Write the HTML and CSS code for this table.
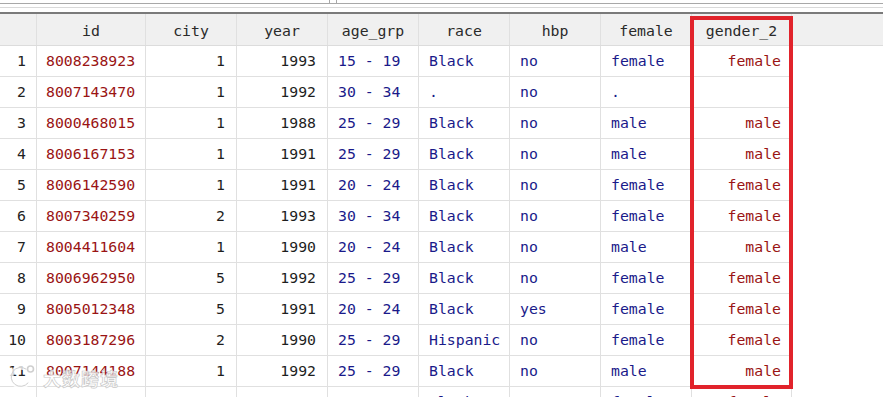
FILE: index.html
```html
<!DOCTYPE html>
<html>
<head>
<meta charset="utf-8">
<link rel="stylesheet" href="styles.css">
</head>
<body>
<div class="page">
  <div class="topbar">
    <div class="box box-left"></div>
    <div class="box box-right"></div>
  </div>
  <div class="sep"></div>
  <div class="grid">
    <div class="row head">
      <div class="c"></div>
      <div class="c">id</div>
      <div class="c">city</div>
      <div class="c">year</div>
      <div class="c">age_grp</div>
      <div class="c">race</div>
      <div class="c">hbp</div>
      <div class="c">female</div>
      <div class="c">gender_2</div>
      <div class="c fill"></div>
    </div>
    <div class="row"><div class="c n">1</div><div class="c s">8008238923</div><div class="c r">1</div><div class="c r">1993</div><div class="c l">15 - 19</div><div class="c l">Black</div><div class="c l">no</div><div class="c l">female</div><div class="c sr">female</div></div>
    <div class="row"><div class="c n">2</div><div class="c s">8007143470</div><div class="c r">1</div><div class="c r">1992</div><div class="c l">30 - 34</div><div class="c l">.</div><div class="c l">no</div><div class="c l">.</div><div class="c sr"></div></div>
    <div class="row"><div class="c n">3</div><div class="c s">8000468015</div><div class="c r">1</div><div class="c r">1988</div><div class="c l">25 - 29</div><div class="c l">Black</div><div class="c l">no</div><div class="c l">male</div><div class="c sr">male</div></div>
    <div class="row"><div class="c n">4</div><div class="c s">8006167153</div><div class="c r">1</div><div class="c r">1991</div><div class="c l">25 - 29</div><div class="c l">Black</div><div class="c l">no</div><div class="c l">male</div><div class="c sr">male</div></div>
    <div class="row"><div class="c n">5</div><div class="c s">8006142590</div><div class="c r">1</div><div class="c r">1991</div><div class="c l">20 - 24</div><div class="c l">Black</div><div class="c l">no</div><div class="c l">female</div><div class="c sr">female</div></div>
    <div class="row"><div class="c n">6</div><div class="c s">8007340259</div><div class="c r">2</div><div class="c r">1993</div><div class="c l">30 - 34</div><div class="c l">Black</div><div class="c l">no</div><div class="c l">female</div><div class="c sr">female</div></div>
    <div class="row"><div class="c n">7</div><div class="c s">8004411604</div><div class="c r">1</div><div class="c r">1990</div><div class="c l">20 - 24</div><div class="c l">Black</div><div class="c l">no</div><div class="c l">male</div><div class="c sr">male</div></div>
    <div class="row"><div class="c n">8</div><div class="c s">8006962950</div><div class="c r">5</div><div class="c r">1992</div><div class="c l">25 - 29</div><div class="c l">Black</div><div class="c l">no</div><div class="c l">female</div><div class="c sr">female</div></div>
    <div class="row"><div class="c n">9</div><div class="c s">8005012348</div><div class="c r">5</div><div class="c r">1991</div><div class="c l">20 - 24</div><div class="c l">Black</div><div class="c l">yes</div><div class="c l">female</div><div class="c sr">female</div></div>
    <div class="row"><div class="c n">10</div><div class="c s">8003187296</div><div class="c r">2</div><div class="c r">1990</div><div class="c l">25 - 29</div><div class="c l">Hispanic</div><div class="c l">no</div><div class="c l">female</div><div class="c sr">female</div></div>
    <div class="row"><div class="c n">11</div><div class="c s">8007144188</div><div class="c r">1</div><div class="c r">1992</div><div class="c l">25 - 29</div><div class="c l">Black</div><div class="c l">no</div><div class="c l">male</div><div class="c sr">male</div></div>
    <div class="row"><div class="c n"></div><div class="c s"></div><div class="c r"></div><div class="c r"></div><div class="c l"></div><div class="c l">Black</div><div class="c l"></div><div class="c l">female</div><div class="c sr">female</div></div>
  </div>
  <div class="highlight"></div>
  <div class="watermark">
    <svg class="wm-logo" width="26" height="26" viewBox="0 0 26 26">
      <path d="M17 6 A9.5 9.5 0 1 0 19 20" fill="none" stroke="#ffffff" stroke-opacity="0.8" stroke-width="4.5" stroke-linecap="round"/>
      <path d="M17 6 A9.5 9.5 0 1 0 19 20" fill="none" stroke="#cfcfcf" stroke-width="1" stroke-linecap="round"/>
      <circle cx="21.5" cy="6" r="3" fill="none" stroke="#cfcfcf" stroke-width="1.6"/>
    </svg>
    <span class="wm-text">大数跨境</span>
  </div>
</div>
</body>
</html>
```

FILE: styles.css
```css
html, body {
  margin: 0;
  padding: 0;
  background: #ffffff;
}

.page {
  position: relative;
  width: 883px;
  height: 397px;
  overflow: hidden;
  font-family: "DejaVu Sans Mono", "Liberation Mono", monospace;
  font-size: 14.8px;
}

.topbar {
  display: flex;
  gap: 6px;
  height: 3px;
  border-bottom: 1px solid #a8a8a8;
}

.box {
  height: 3px;
}

.box-left {
  width: 329px;
  border-right: 1px solid #a8a8a8;
}

.box-right {
  flex: 1;
  border-left: 1px solid #a8a8a8;
}

.sep {
  margin-top: 3px;
  height: 4px;
  border-top: 1px solid #d9d9d9;
  border-bottom: 2px solid #7a7a7a;
}

.row {
  display: grid;
  grid-template-columns: 37px 109px 91px 91px 91px 91px 91px 91px 100px;
  height: 31px;
}

.row.head {
  grid-template-columns: 37px 109px 91px 91px 91px 91px 91px 91px 100px 1fr;
  background: #f0f0f0;
  border-bottom: 1px solid #dcdcdc;
  height: 31px;
}

.c {
  box-sizing: border-box;
  border-right: 1px solid #e0e0e0;
  border-bottom: 1px solid #e0e0e0;
  height: 31px;
  line-height: 30px;
  white-space: pre;
  overflow: hidden;
  font-weight: 400;
}

.head .c {
  height: 31px;
  line-height: 31px;
  padding-top: 1px;
  border-bottom: none;
  text-align: center;
  color: #2a2a2a;
}

.head .c.fill {
  border-right: none;
}

.n {
  text-align: right;
  padding-right: 10px;
  color: #222222;
}

.s {
  color: #9a1414;
  padding-left: 9px;
}

.r {
  text-align: right;
  padding-right: 11px;
  color: #1e1e1e;
}

.l {
  color: #1a1a8a;
  padding-left: 10px;
}

.sr {
  color: #9a1414;
  text-align: right;
  padding-right: 10px;
}

.highlight {
  position: absolute;
  left: 690px;
  top: 16px;
  width: 103px;
  height: 373px;
  box-sizing: border-box;
  border: 4px solid #e1232b;
}

.watermark {
  position: absolute;
  left: 9px;
  top: 363px;
  display: flex;
  align-items: flex-end;
  gap: 8px;
}

.wm-logo {
  display: block;
}

.wm-text {
  font-family: "Noto Sans CJK SC", sans-serif;
  font-size: 18px;
  line-height: 22px;
  font-weight: 700;
  color: rgba(255, 255, 255, 0.8);
  -webkit-text-stroke: 0.7px #c8c8c8;
  letter-spacing: 1px;
}
```
